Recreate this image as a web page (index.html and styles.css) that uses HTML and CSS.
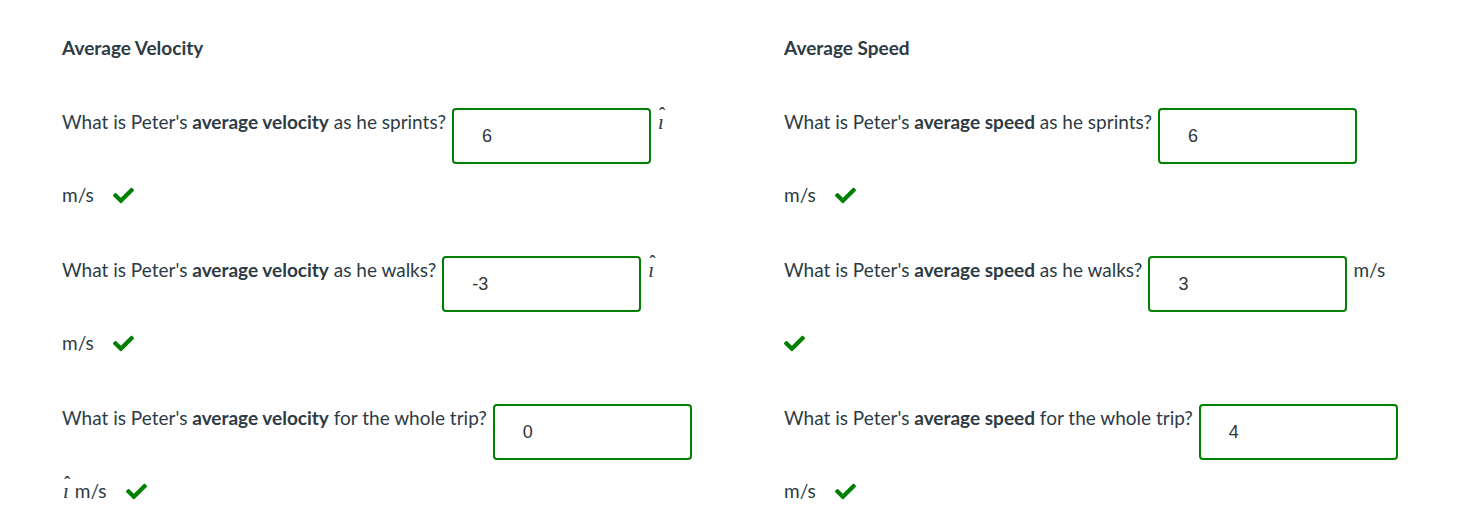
FILE: index.html
```html
<!DOCTYPE html>
<html lang="en">
<head>
<meta charset="utf-8">
<title>Average Velocity and Speed</title>
<link rel="stylesheet" href="styles.css">
</head>
<body>
<div class="page">
  <section class="col">
    <h3 class="title">Average Velocity</h3>
    <div class="block">
      <div class="q-row">
        <span class="q">What is Peter's <b>average velocity</b> as he sprints?</span>
        <span class="answer">6</span>
        <span class="unit"><span class="hat">ı</span></span>
      </div>
      <div class="unit-row"><span>m/s</span><svg class="check" viewBox="0 0 512 512"><path d="M173.9 439.4l-166.4-166.4c-10-10-10-26.2 0-36.2l36.2-36.2c10-10 26.2-10 36.2 0L192 312.7 432.1 72.6c10-10 26.2-10 36.2 0l36.2 36.2c10 10 10 26.2 0 36.2l-294.4 294.4c-10 10-26.2 10-36.2 0z"/></svg></div>
    </div>
    <div class="block">
      <div class="q-row">
        <span class="q">What is Peter's <b>average velocity</b> as he walks?</span>
        <span class="answer">-3</span>
        <span class="unit"><span class="hat">ı</span></span>
      </div>
      <div class="unit-row"><span>m/s</span><svg class="check" viewBox="0 0 512 512"><path d="M173.9 439.4l-166.4-166.4c-10-10-10-26.2 0-36.2l36.2-36.2c10-10 26.2-10 36.2 0L192 312.7 432.1 72.6c10-10 26.2-10 36.2 0l36.2 36.2c10 10 10 26.2 0 36.2l-294.4 294.4c-10 10-26.2 10-36.2 0z"/></svg></div>
    </div>
    <div class="block">
      <div class="q-row">
        <span class="q">What is Peter's <b>average velocity</b> for the whole trip?</span>
        <span class="answer">0</span>
      </div>
      <div class="unit-row"><span class="unit-text"><span class="hat">ı</span> m/s</span><svg class="check" viewBox="0 0 512 512"><path d="M173.9 439.4l-166.4-166.4c-10-10-10-26.2 0-36.2l36.2-36.2c10-10 26.2-10 36.2 0L192 312.7 432.1 72.6c10-10 26.2-10 36.2 0l36.2 36.2c10 10 10 26.2 0 36.2l-294.4 294.4c-10 10-26.2 10-36.2 0z"/></svg></div>
    </div>
  </section>
  <section class="col">
    <h3 class="title">Average Speed</h3>
    <div class="block">
      <div class="q-row">
        <span class="q">What is Peter's <b>average speed</b> as he sprints?</span>
        <span class="answer">6</span>
      </div>
      <div class="unit-row"><span>m/s</span><svg class="check" viewBox="0 0 512 512"><path d="M173.9 439.4l-166.4-166.4c-10-10-10-26.2 0-36.2l36.2-36.2c10-10 26.2-10 36.2 0L192 312.7 432.1 72.6c10-10 26.2-10 36.2 0l36.2 36.2c10 10 10 26.2 0 36.2l-294.4 294.4c-10 10-26.2 10-36.2 0z"/></svg></div>
    </div>
    <div class="block">
      <div class="q-row">
        <span class="q">What is Peter's <b>average speed</b> as he walks?</span>
        <span class="answer">3</span>
        <span class="unit">m/s</span>
      </div>
      <div class="unit-row"><svg class="check" viewBox="0 0 512 512"><path d="M173.9 439.4l-166.4-166.4c-10-10-10-26.2 0-36.2l36.2-36.2c10-10 26.2-10 36.2 0L192 312.7 432.1 72.6c10-10 26.2-10 36.2 0l36.2 36.2c10 10 10 26.2 0 36.2l-294.4 294.4c-10 10-26.2 10-36.2 0z"/></svg></div>
    </div>
    <div class="block">
      <div class="q-row">
        <span class="q">What is Peter's <b>average speed</b> for the whole trip?</span>
        <span class="answer">4</span>
      </div>
      <div class="unit-row"><span>m/s</span><svg class="check" viewBox="0 0 512 512"><path d="M173.9 439.4l-166.4-166.4c-10-10-10-26.2 0-36.2l36.2-36.2c10-10 26.2-10 36.2 0L192 312.7 432.1 72.6c10-10 26.2-10 36.2 0l36.2 36.2c10 10 10 26.2 0 36.2l-294.4 294.4c-10 10-26.2 10-36.2 0z"/></svg></div>
    </div>
  </section>
</div>
</body>
</html>
```

FILE: styles.css
```css
html, body {
  margin: 0;
  padding: 0;
  background: #ffffff;
}

body {
  font-family: "Lato", "Source Sans Pro", "Noto Sans", sans-serif;
  font-size: 19px;
  color: #2d3b45;
}

.page {
  display: grid;
  grid-template-columns: 722px 1fr;
  padding: 33px 0 0 62px;
}

.col {
  display: flex;
  flex-direction: column;
}

.title {
  margin: 0 0 45px 0;
  font-size: 19px;
  line-height: 30px;
  font-weight: 700;
}

.block {
  display: flex;
  flex-direction: column;
  margin-bottom: 46px;
}

.q-row {
  display: flex;
  align-items: flex-start;
  gap: 6px;
}

.q {
  line-height: 28px;
  white-space: nowrap;
}

.q b {
  font-weight: 700;
}

.answer {
  box-sizing: border-box;
  width: 199px;
  height: 56px;
  border: 2px solid #008000;
  border-radius: 4px;
  padding: 1px 28px 0;
  display: flex;
  align-items: center;
  font-family: "Liberation Sans", Arial, sans-serif;
  font-size: 18px;
  color: #333333;
}

.unit {
  line-height: 28px;
}

.hat {
  position: relative;
  display: inline-block;
  font-family: "Liberation Serif", "DejaVu Serif", serif;
  font-style: italic;
  font-size: 21px;
  line-height: 1;
  padding: 0 1px;
}

.hat::before {
  content: "\02C6";
  position: absolute;
  left: 2px;
  top: -8px;
  font-style: normal;
  font-size: 19px;
  font-weight: 700;
}

.unit-text {
  display: flex;
  align-items: baseline;
  gap: 5px;
}

.unit-row {
  display: flex;
  align-items: center;
  gap: 19px;
  margin-top: 16px;
  height: 30px;
  line-height: 30px;
}

.check {
  width: 21px;
  height: 21px;
  fill: #008000;
}
```
